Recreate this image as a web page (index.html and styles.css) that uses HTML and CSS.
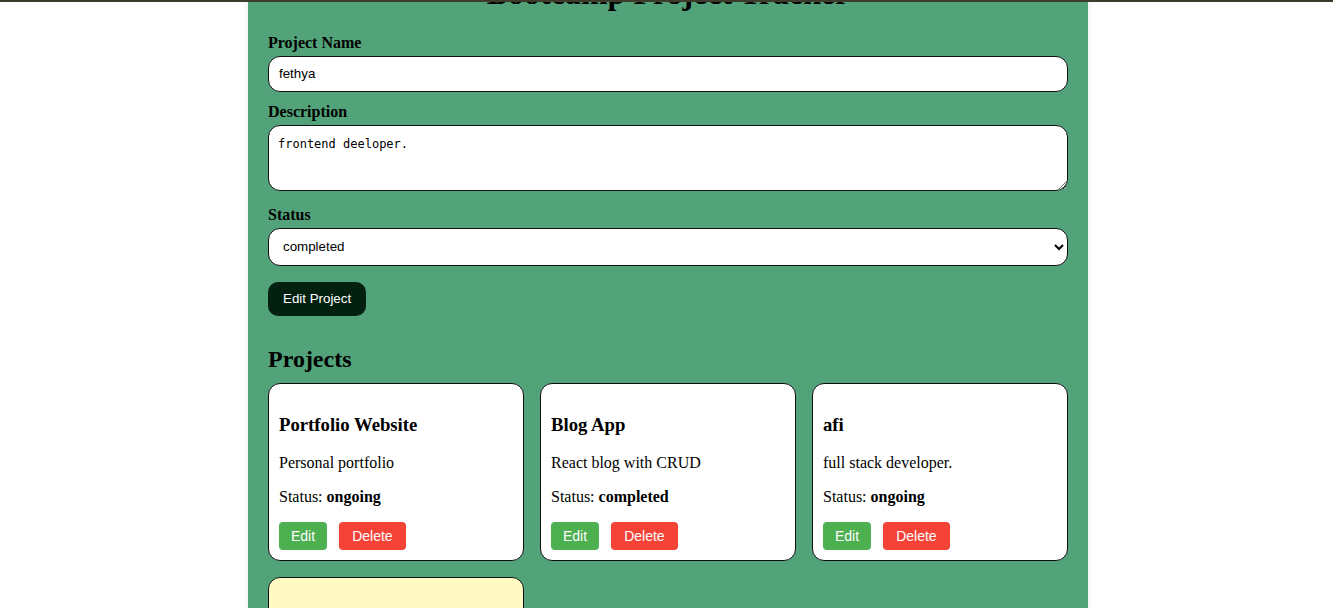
FILE: index.html
```html
<!DOCTYPE html>
<html>
<head>
<meta charset="utf-8">
<title>Bootcamp Project Tracker</title>
<link rel="stylesheet" href="styles.css">
</head>
<body>
<div class="topline"></div>
<div class="app">
  <h1 class="title">Bootcamp Project Tracker</h1>
  <form class="form">
    <label class="label">Project Name</label>
    <input class="field input" type="text" value="fethya">
    <label class="label">Description</label>
    <textarea class="field textarea">frontend deeloper.</textarea>
    <label class="label">Status</label>
    <select class="field select">
      <option>ongoing</option>
      <option selected>completed</option>
    </select>
    <div class="actions"><button type="button" class="submit">Edit Project</button></div>
  </form>
  <h2 class="section">Projects</h2>
  <div class="grid">
    <div class="card">
      <h3 class="card-title">Portfolio Website</h3>
      <p class="card-text">Personal portfolio</p>
      <p class="card-text">Status: <strong>ongoing</strong></p>
      <div class="card-actions"><button class="btn edit">Edit</button><button class="btn delete">Delete</button></div>
    </div>
    <div class="card">
      <h3 class="card-title">Blog App</h3>
      <p class="card-text">React blog with CRUD</p>
      <p class="card-text">Status: <strong>completed</strong></p>
      <div class="card-actions"><button class="btn edit">Edit</button><button class="btn delete">Delete</button></div>
    </div>
    <div class="card">
      <h3 class="card-title">afi</h3>
      <p class="card-text">full stack developer.</p>
      <p class="card-text">Status: <strong>ongoing</strong></p>
      <div class="card-actions"><button class="btn edit">Edit</button><button class="btn delete">Delete</button></div>
    </div>
    <div class="card card-editing">
      <h3 class="card-title">fethya</h3>
      <p class="card-text">frontend deeloper.</p>
      <p class="card-text">Status: <strong>completed</strong></p>
      <div class="card-actions"><button class="btn edit">Edit</button><button class="btn delete">Delete</button></div>
    </div>
  </div>
</div>
</body>
</html>
```
FILE: styles.css
```css
html, body {
  margin: 0;
  padding: 0;
  background: #ffffff;
  font-family: "Liberation Serif", "Times New Roman", serif;
  color: #000;
}
body {
  padding-left: 3px;
}
.topline {
  position: fixed;
  top: 0;
  left: 0;
  right: 0;
  height: 2px;
  background: #3d3c2b;
  z-index: 10;
}
.app {
  width: 800px;
  margin: -66px auto 0;
  padding: 20px;
  background: #52a37a;
  box-shadow: 0 0 8px rgba(0, 0, 0, 0.08);
}
.title {
  font-size: 32px;
  font-weight: bold;
  text-align: center;
  margin: 21.44px 0;
}
.form {
  display: flex;
  flex-direction: column;
}
.label {
  display: block;
  font-size: 16px;
  font-weight: bold;
  line-height: 18px;
  margin-bottom: 4px;
}
.field {
  display: block;
  box-sizing: border-box;
  width: 100%;
  border: 1px solid #111;
  border-radius: 12px;
  background: #fff;
  padding: 0 10px;
  margin: 0 0 11px;
  color: #000;
}
.input {
  height: 36px;
  font-family: "Liberation Sans", Arial, sans-serif;
  font-size: 13.33px;
}
.textarea {
  height: 66px;
  padding: 11px 10px 10px 9px;
  font-family: "DejaVu Sans Mono", "Liberation Mono", monospace;
  font-size: 12px;
  resize: vertical;
  margin-bottom: 15px;
}
.select {
  height: 38px;
  font-family: "Liberation Sans", Arial, sans-serif;
  font-size: 13.33px;
  padding: 0 10px;
  margin-bottom: 16px;
}
.actions {
  display: flex;
}
.submit {
  height: 34px;
  padding: 0 15px;
  border: none;
  border-radius: 10px;
  background: #04200f;
  color: #fff;
  font-family: "Liberation Sans", Arial, sans-serif;
  font-size: 13.33px;
}
.section {
  font-size: 24px;
  font-weight: bold;
  margin: 30px 0 10px;
}
.grid {
  display: grid;
  grid-template-columns: repeat(3, 1fr);
  gap: 16px;
}
.card {
  background: #fff;
  border: 1px solid #111;
  border-radius: 12px;
  padding: 11px 10px 10px;
}
.card-editing {
  background: #fff9c4;
}
.card-title {
  font-size: 18.72px;
  font-weight: bold;
  line-height: 22px;
  margin: 18.72px 0;
}
.card-text {
  font-size: 16px;
  margin: 16px 0;
}
.card-actions {
  display: flex;
  gap: 12px;
}
.btn {
  height: 28px;
  padding: 0 12px;
  border: none;
  border-radius: 4px;
  color: #fff;
  font-family: "Liberation Sans", Arial, sans-serif;
  font-size: 14px;
}
.edit {
  background: #4caf50;
}
.delete {
  background: #f44336;
  padding: 0 13px;
}
```
